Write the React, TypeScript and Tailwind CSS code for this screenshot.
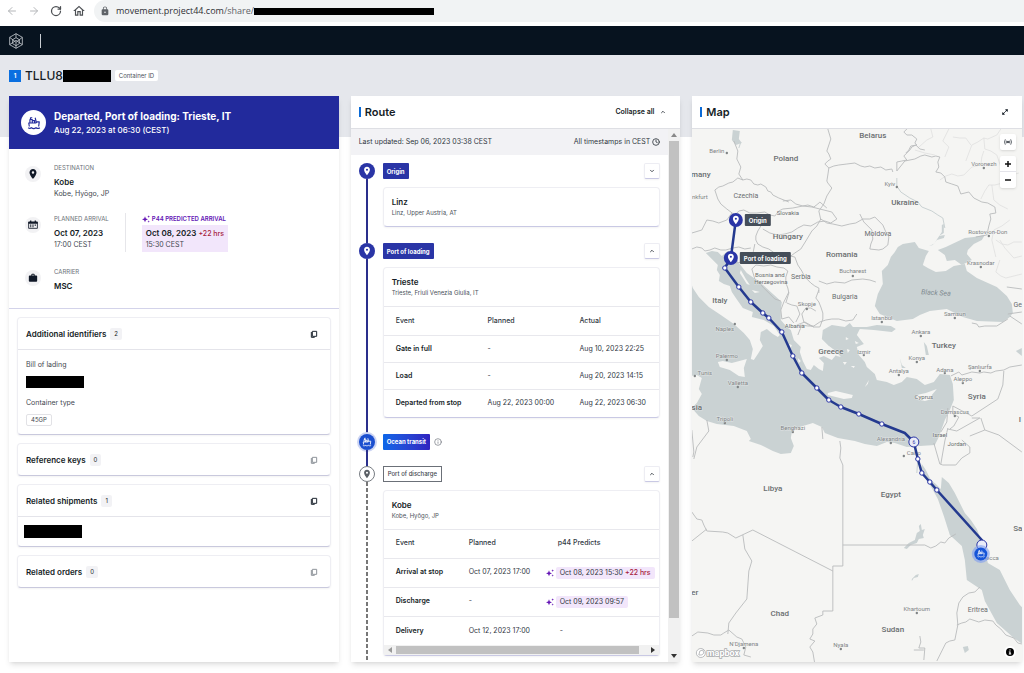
import type { ReactNode } from 'react'
import { ArrowLeft, ArrowRight, ChevronDown, ChevronUp, Clock, Info, Maximize2, RotateCw } from 'lucide-react'
import { MdLock, MdOutlineHome, MdPlace, MdWork } from 'react-icons/md'

const PIN = 'M12 2C8 2 5 5 5 9c0 5.200 7 13 7 13s7-7.800 7-13c0-4-3-7-7-7zm0 9.500a2.500 2.500 0 1 1 0-5 2.500 2.500 0 0 1 0 5z'

function ShipShape() {
    return (
        <g fill="none" stroke="currentColor" strokeWidth="2" strokeLinejoin="round">
            <path d="M5 12V6h4v6M9 12V8h4v4M6 6V3h3M16 11l-2-8" />
            <path d="M4 18l-1-6h12l2-2h4l-1 8" />
            <path d="M2 20c2 1.500 4 1.500 5.500 0 2 1.500 6 1.500 8 0 2 1.500 4.500 1.500 6.500 0" />
        </g>
    )
}

function Ship({ className }: { className: string }) {
    return (
        <svg viewBox="0 0 24 24" className={className}>
            <ShipShape />
        </svg>
    )
}

function Sparkle({ className = 'size-2' }: { className?: string }) {
    return (
        <svg viewBox="0 0 24 24" fill="currentColor" className={`${className} shrink-0 text-[#6415b5]`}>
            <path d="M9 4l2.500 6.500L18 13l-6.500 2.500L9 22l-2.500-6.500L0 13l6.500-2.500z" />
            <path d="M20 1l1 3 3 1-3 1-1 3-1-3-3-1 3-1zM20 16l1 2.500 3 1-3 1-1 2.500-1-2.500-3-1 3-1z" />
        </svg>
    )
}

function Calendar() {
    return (
        <svg viewBox="0 0 24 24" className="size-2.5">
            <path d="M1.500 5h21v15h-21z" fill="none" stroke="currentColor" strokeWidth="2" />
            <path d="M1 4h22v5H1zM5 1h3v4H5zM16 1h3v4h-3zM5 11h3v2.500H5zM10.500 11h3v2.500h-3zM16 11h3v2.500h-3zM5 15h3v2.500H5zM10.500 15h3v2.500h-3z" fill="currentColor" />
        </svg>
    )
}

function Copy() {
    return (
        <svg viewBox="0 0 24 24" fill="none" stroke="currentColor" strokeWidth="3" strokeLinejoin="round" className="size-2">
            <path d="M7 4h13v15H7zM4 6v16h10" />
        </svg>
    )
}

function BrowserBar() {
    return (
        <div className="flex h-[26px] shrink-0 items-start bg-white text-[#5f6368]">
            <div className="flex h-[22px] items-center gap-2.5 pr-2 pl-1.5">
                <button aria-label="Back" className="text-[#b4b6b9]"><ArrowLeft className="size-3" /></button>
                <button aria-label="Forward" className="text-[#b4b6b9]"><ArrowRight className="size-3" /></button>
                <button aria-label="Reload" className="text-[#4c4f53]"><RotateCw className="size-3" strokeWidth={2.5} /></button>
                <button aria-label="Home" className="text-[#4c4f53]"><MdOutlineHome className="size-3.5" /></button>
            </div>
            <div className="flex h-[22px] flex-1 items-center rounded-l-full bg-[#f1f3f4] pl-1.5 font-['Open_Sans',sans-serif] text-[9px]">
                <MdLock className="mr-1.5 size-2.5" />
                <span className="text-[#303134]">movement.project44.com</span>
                <span>/share/</span>
                <span className="h-[7px] w-[180px] bg-black" />
            </div>
        </div>
    )
}

function NavBar() {
    return (
        <nav className="flex h-[29px] shrink-0 items-center gap-4 bg-[#07131f] pl-2 text-[#c9ced3]">
            <svg viewBox="0 0 24 24" fill="none" stroke="currentColor" strokeWidth="1.200" className="size-4">
                <path d="M12 1l9.500 5.500v11L12 23l-9.500-5.500v-11z" />
                <path d="M12 1v6M12 14v9M2.500 6.500L12 14l9.500-7.500M2.500 17.500L12 11l9.500 6.500M7 10v6l5 3 5-3v-6l-5-3z" />
            </svg>
            <span className="h-3.5 w-px bg-[#c9ced3]" />
        </nav>
    )
}

function Detail({ icon, children }: { icon: ReactNode; children: ReactNode }) {
    return (
        <div className="flex gap-[13px]">
            <span className="mt-1 flex size-4 shrink-0 items-center justify-center rounded-full bg-[#f2f2f4] text-[#101827]">{icon}</span>
            {children}
        </div>
    )
}

function Label({ children }: { children: ReactNode }) {
    return <p className="text-[6px] leading-3 text-[#6b7078]">{children}</p>
}

function Group({ title, count, muted, children }: { title: string; count: number; muted?: boolean; children?: ReactNode }) {
    return (
        <section className="rounded-sm border border-[#eeeef3] border-b-[#c9c9dd] shadow-xs">
            <div className="flex h-[31px] items-center px-2">
                <h3 className="text-[8px] font-semibold">{title}</h3>
                <span className="ml-1 rounded-xs bg-[#f2f2f5] px-1 text-[6px] leading-3">{count}</span>
                <button aria-label={`Copy ${title}`} className={`mr-1 ml-auto ${muted ? 'text-[#8f949b]' : 'text-[#1d2630]'}`}><Copy /></button>
            </div>
            {children}
        </section>
    )
}

function Summary() {
    return (
        <section className="overflow-hidden bg-white shadow-md">
            <div className="flex h-[53px] items-center gap-2 bg-[#222a9c] pl-3 text-white">
                <span className="flex size-[25px] items-center justify-center rounded-full bg-white text-[#222a9c]"><Ship className="size-3.5" /></span>
                <div>
                    <h2 className="text-[10px] leading-3.5 font-bold">Departed, Port of loading: Trieste, IT</h2>
                    <p className="text-[8px] leading-3.5 font-medium">Aug 22, 2023 at 06:30 (CEST)</p>
                </div>
            </div>
            <div className="flex h-[160px] flex-col gap-3.5 border-b border-[#d3d3ea] pt-[13px] pl-4">
                <Detail icon={<MdPlace className="size-3" />}>
                    <div>
                        <Label>DESTINATION</Label>
                        <p className="mt-0.5 text-[8px] leading-3 font-semibold">Kobe</p>
                        <p className="text-[7px] leading-[11px] text-[#3f474f]">Kobe, Hyōgo, JP</p>
                    </div>
                </Detail>
                <Detail icon={<Calendar />}>
                    <div className="flex">
                        <div className="border-r border-[#e6e6ea] pr-4">
                            <Label>PLANNED ARRIVAL</Label>
                            <p className="mt-0.5 text-[8px] leading-3 font-semibold">Oct 07, 2023</p>
                            <p className="text-[7px] leading-[11px] text-[#3f474f]">17:00 CEST</p>
                        </div>
                        <div className="ml-4">
                            <p className="flex items-center gap-0.5 text-[6px] leading-3 font-semibold text-[#6415b5]"><Sparkle /> P44 PREDICTED ARRIVAL</p>
                            <div className="bg-[#f2e6fb] px-1 py-0.5">
                                <p className="text-[8px] leading-3 font-semibold">Oct 08, 2023 <span className="text-[7px] font-medium text-[#a61b3c]">+22 hrs</span></p>
                                <p className="text-[7px] leading-2.5 text-[#3f474f]">15:30 CEST</p>
                            </div>
                        </div>
                    </div>
                </Detail>
                <Detail icon={<MdWork className="size-2.5" />}>
                    <div>
                        <Label>CARRIER</Label>
                        <p className="mt-0.5 text-[8px] leading-3 font-semibold">MSC</p>
                    </div>
                </Detail>
            </div>
            <div className="flex flex-col gap-2 p-2">
                <Group title="Additional identifiers" count={2}>
                    <div className="border-t border-[#e4e4ea] px-2 pt-2 pb-2 text-[7px] text-[#3f474f]">
                        <p className="leading-3.5">Bill of lading</p>
                        <div className="mt-1 h-3 w-[58px] bg-black" />
                        <p className="mt-2 leading-3.5">Container type</p>
                        <span className="mt-1 inline-block rounded-xs border border-[#e2e2e6] px-1 text-[6px] leading-2.5">45GP</span>
                    </div>
                </Group>
                <Group title="Reference keys" count={0} muted />
                <Group title="Related shipments" count={1}>
                    <div className="border-t border-[#e4e4ea] px-1.5 pt-2 pb-2">
                        <div className="h-[13px] w-[58px] bg-black" />
                    </div>
                </Group>
                <Group title="Related orders" count={0} muted />
            </div>
        </section>
    )
}

function PanelHeader({ title, children }: { title: string; children: ReactNode }) {
    return (
        <div className="flex h-[33px] shrink-0 items-center border-b border-[#dedfe4] pr-3.5 pl-2">
            <span className="mr-1 h-2.5 w-0.5 bg-[#0a6ad6]" />
            <h2 className="mr-auto text-[11px] font-semibold">{title}</h2>
            {children}
        </div>
    )
}

function PinMarker({ pending }: { pending?: boolean }) {
    return (
        <span className={`flex size-4 items-center justify-center rounded-full ${pending ? 'border border-[#777c82] bg-white text-[#5b6066]' : 'bg-[#2a35a6] text-white'}`}>
            <MdPlace className="size-2.5" />
        </span>
    )
}

function Stop({ marker, badge, line, action, children }: { marker: ReactNode; badge: ReactNode; line: string; action?: 'open' | 'closed'; children?: ReactNode }) {
    return (
        <li className="flex gap-2">
            <div className="flex w-4 shrink-0 flex-col items-center">
                {marker}
                <span className={`flex-1 ${line}`} />
            </div>
            <div className="min-w-0 flex-1 pb-4">
                <div className="flex h-4 items-center">
                    {badge}
                    {action && (
                        <button aria-label="Toggle stop" className="ml-auto flex size-4 items-center justify-center rounded-xs border border-[#ededf3] border-b-[#c9c9e4] shadow-xs">
                            {action === 'open' ? <ChevronUp className="size-1.5" strokeWidth={3} /> : <ChevronDown className="size-1.5" strokeWidth={3} />}
                        </button>
                    )}
                </div>
                {children}
            </div>
        </li>
    )
}

function StopCard({ city, place, children }: { city: string; place: string; children?: ReactNode }) {
    return (
        <div className="mt-2 rounded-sm border border-[#eeeef3] border-b-[#c9c9e4] shadow-xs">
            <div className="h-[38px] px-2 pt-2">
                <h3 className="text-[8px] leading-3 font-semibold">{city}</h3>
                <p className="text-[6px] leading-2.5 text-[#4b525a]">{place}</p>
            </div>
            {children}
        </div>
    )
}

const solid = 'w-0.5 bg-[#2a2f8c]'
const badge = 'flex h-4 items-center rounded-[1px] px-1 text-[6px] font-bold text-white'
const loadingRows = [
    ['Gate in full', '-', 'Aug 10, 2023 22:25'],
    ['Load', '-', 'Aug 20, 2023 14:15'],
    ['Departed from stop', 'Aug 22, 2023 00:00', 'Aug 22, 2023 06:30'],
]
const dischargeRows = [
    { event: 'Arrival at stop', planned: 'Oct 07, 2023 17:00', predicted: 'Oct 08, 2023 15:30', late: '+22 hrs' },
    { event: 'Discharge', planned: '-', predicted: 'Oct 09, 2023 09:57', late: '' },
    { event: 'Delivery', planned: 'Oct 12, 2023 17:00', predicted: '', late: '' },
]

function Route() {
    return (
        <section className="flex min-h-0 flex-col bg-white shadow-md">
            <PanelHeader title="Route">
                <button className="flex items-center gap-1.5 text-[7px] font-semibold">Collapse all <ChevronUp className="size-1.5" strokeWidth={3} /></button>
            </PanelHeader>
            <div className="flex min-h-0 flex-1">
                <div className="min-w-0 flex-1 overflow-hidden">
                    <div className="flex h-[26px] items-center justify-between bg-[#f2f2f5] px-2 text-[7px] text-[#30373f]">
                        <span>Last updated: Sep 06, 2023 03:38 CEST</span>
                        <span className="flex items-center gap-0.5">All timestamps in CEST <Clock className="size-2" strokeWidth={2.5} /></span>
                    </div>
                    <ul className="pt-2 pr-2 pl-2">
                        <Stop marker={<PinMarker />} badge={<span className={`${badge} bg-[#2a35a6]`}>Origin</span>} line={solid} action="closed">
                            <StopCard city="Linz" place="Linz, Upper Austria, AT" />
                        </Stop>
                        <Stop marker={<PinMarker />} badge={<span className={`${badge} bg-[#2a35a6]`}>Port of loading</span>} line={solid} action="open">
                            <StopCard city="Trieste" place="Trieste, Friuli Venezia Giulia, IT">
                                <table className="w-full table-fixed text-left text-[7px] text-[#30373f]">
                                    <thead>
                                        <tr className="h-[29px] border-t border-[#e8e8ed]">
                                            <th className="pl-3 font-medium">Event</th>
                                            <th className="pl-3 font-medium">Planned</th>
                                            <th className="pl-3 font-medium">Actual</th>
                                        </tr>
                                    </thead>
                                    <tbody>
                                        {loadingRows.map(([event, planned, actual]) => (
                                            <tr key={event} className="h-[27px] border-t border-[#e8e8ed] whitespace-nowrap">
                                                <td className="pl-3 font-semibold text-[#151d26]">{event}</td>
                                                <td className="pl-3">{planned}</td>
                                                <td className="pl-3">{actual}</td>
                                            </tr>
                                        ))}
                                    </tbody>
                                </table>
                            </StopCard>
                        </Stop>
                        <Stop
                            marker={<span className="flex size-4 items-center justify-center rounded-full bg-[#1b4fcf] text-white ring-2 ring-[#cdd5f3]"><Ship className="size-2.5" /></span>}
                            badge={<><span className={`${badge} bg-linear-to-r from-[#0a66e8] to-[#2f22c0]`}>Ocean transit</span><Info className="ml-1 size-2 text-[#6b7078]" /></>}
                            line={solid}
                        />
                        <Stop
                            marker={<PinMarker pending />}
                            badge={<span className="flex h-4 items-center border border-[#6b7078] px-1 text-[6px] font-medium text-[#3f474f]">Port of discharge</span>}
                            line="w-0.5 bg-[repeating-linear-gradient(to_bottom,#777_0_4px,#fff_4px_6px)]"
                            action="open"
                        >
                            <StopCard city="Kobe" place="Kobe, Hyōgo, JP">
                                <table className="w-full table-fixed text-left text-[7px] text-[#30373f]">
                                    <thead>
                                        <tr className="h-[29px] border-t border-[#e8e8ed]">
                                            <th className="w-[73px] pl-3 font-medium">Event</th>
                                            <th className="w-[77px] pl-3 font-medium">Planned</th>
                                            <th className="pl-6 font-medium">p44 Predicts</th>
                                        </tr>
                                    </thead>
                                    <tbody>
                                        {dischargeRows.map((row) => (
                                            <tr key={row.event} className="h-[29px] border-t border-[#e8e8ed] whitespace-nowrap">
                                                <td className="pl-3 font-semibold text-[#151d26]">{row.event}</td>
                                                <td className="pl-3">{row.planned}</td>
                                                <td className={row.predicted ? 'pl-3' : 'pl-[26px]'}>
                                                    {row.predicted ? (
                                                        <span className="flex items-center gap-0.5">
                                                            <Sparkle />
                                                            <span className="rounded-xs bg-[#f2e6fb] px-1 leading-3">
                                                                {row.predicted} {row.late && <span className="font-medium text-[#a61b3c]">{row.late}</span>}
                                                            </span>
                                                        </span>
                                                    ) : '-'}
                                                </td>
                                            </tr>
                                        ))}
                                    </tbody>
                                </table>
                                <div className="flex h-2.5 items-center bg-[#f1f1f1] px-1 text-[#333]">
                                    <svg viewBox="0 0 4 6" className="h-1.5 w-1 text-[#999]"><path d="M4 0v6L0 3z" fill="currentColor" /></svg>
                                    <span className="mr-3 ml-1 h-2 flex-1 bg-[#c1c1c1]" />
                                    <svg viewBox="0 0 4 6" className="h-1.5 w-1"><path d="M0 0v6l4-3z" fill="currentColor" /></svg>
                                </div>
                            </StopCard>
                        </Stop>
                    </ul>
                </div>
                <div className="flex w-3 shrink-0 flex-col items-center bg-[#f1f1f1] py-1">
                    <svg viewBox="0 0 6 4" className="h-1 w-1.5 shrink-0"><path d="M0 4h6L3 0z" fill="#888" /></svg>
                    <span className="my-1 w-2.5 flex-9 bg-[#c1c1c1]" />
                    <span className="flex-[0.6]" />
                    <svg viewBox="0 0 6 4" className="h-1 w-1.5 shrink-0"><path d="M0 0h6L3 4z" fill="#333" /></svg>
                </div>
            </div>
        </section>
    )
}

const water = [
    'M715 262l3 3-1 5 3 5-1 6 5 3 6 2 2 6 4 6 7 10 10 4-1 5 12 3 10 6 6 9-2 2-5-3-6-5-6 3-1 8 3 6-5 8-4 6-3-1 2-10-3-9-6-7-10-9-13-9-12-8-10-10-6-9-2-6v94l6-1 5 3-3 11 3 5-5 9-5 5 7 8 8 5 10 3 17 2 13 5 4 8-2 2 12 4 12 6 8 3 10-1 3-7-3-8 1-6 8-5 13-4 9 4 3 6 13 5 17 3 10 3 12 2 10-4 8 1 12 4 13-1 15-1 4-8 6-17 5-10 4-10-1-16-3-9-10-1-6 8-9 3-8-6-10-2-5 5-8 3-7-3-10-2-2-6-8-7-2-5-6-7-2-8 7-3-7-9 3-6 14 1 18 2 4-3-5-3-14-1-10 2-14 0-3-4-5 4-13-2-9 5-1 9 6 6 9 9-5 6-8-4-5 2 5 5-1 8-4-2-5-4-3 5-4-1-4-8-3-9 1-5-7-7-3-10-4-3-6-7 0-10 1-8-10-9-11-10-14-10-8-10-5-9-6-3-6 5-4-4-6-1-6 2z',
    'M888 265l3-8 4-5 3-5 5-3 12-2 4 6 10 3-3 5-3 9 5 3 8 4 10-1 8-5 11-2 2 7 10 7 20 9 10 9 5 8 1 9-3 4-7 5-26-1-14-4-16-8-17 2-10 4-7 4-16 2-17-7-5-8 3-12 5-10-1-13z',
    'M938 250l8-3 19-9 9-1 11-2-3 5-8 4-6 6-1 4 5 6-10 5-7-5-8 1-2-6z',
    'M942 477l7 6 6 10 10 20 6 7 6 9 8 20 3 14 12 7 10 20 10 15 4 4v36l-10-7-17-15-12-22-3-11-15-10-2-20-3-14-12-11-6-19-6-17-6-11-6-9-5-10 1-5 4 6 5 10 5 4 5 5z',
    'M733 130l7 1-1 8 3 4-6 2-4-5z',
    'M904 548l5-5 6-3 2-7 3-2-1-5 2-2 1 6 3-1-2 6 1 3-5 1-2 4-6 2-4 4z',
    'M912 579l4-4 3-1-1 3-4 1-2 3z',
    'M963 647l5-1 1 4-4 3z',
    'M1016 351l6-3v8z',
    'M929 246l5-2 8-12 0-7 2-1 0 9-5 3 6-1-1 3-7 2-4 5z',
    'M924 342l3 4 2 9-3 0z',
    'M900 358l2 7 4 3-4 0z',
]

const rivers = [
    'M897 178l0 8 4 6 9 6 8 4 4 5 10 4 6 4 5 3 2 10M741 142l-2 6',
    'M918 459l-1 14M914 445l2 8',
]

const islands = [
    'M718 362l5-1 9 2 15-4-3 9 1 9-6-1-9-6-10-3z',
    'M828 393l8-2 17 4-1 3-8 1-16-4z',
    'M917 395l9-2 11-4-5 6 0 4-7 2-8-2z',
    'M829 346l7 5 5 6-4-1-8-7z',
    'M855 341l4 2-3 1zM847 349l3 1-2 3zM843 362l4 0-2 3zM851 366l4 0-1 2zM869 380l-4 7 3-3zM846 337l3 2-3 1zM789 344l2 4 1-3zM798 358l3 3-2 2z',
    'M741 270l5 9 4 6-3-1-7-11zM752 290l8 2-5 1z',
]

const borders = [
    'M734 141l4 10-1 8 4 8-2 7 4 6',
    'M743 180l-5-2-5 4-4 1-6 3-4 1-4 3 3 9 3 5 6 5 8 6 4-4 5-1 6 3 7 0 8-1 5 3 5 1 4-5 4-2 10-1 10-2 9 1 8 2 12 3 5 7-6 4-6-2-7 1-7 4-7-1-6 3-6 4-7 2-7 1-8-2-7-4',
    'M743 180l4-1 4 1 3 4 4 1 3-1 5 3 2 4 3 1 2 3 6 3 10 4M783 201l8-1 5 4 7 2 5-1 6 2 4-3 2-2 7 6',
    'M828 129l3 10-4 12 2 3 2 5-3 2-3 3 4 4-1 7-1 6 1 2 4 5-5 8-3 8-5 7 2 9',
    'M829 168l5-2 5-1 8-1 8-1 6 3 4 1 5-1 5 2 6-1 5 3 6-1 1 3M897 171l0-9 5-1 5-1-3-4 3-3 3-3 2-3 4-2 4 4 5 1M907 129l-3 3 3 3 5 0 5 4-2 4 2 2-6 1-2 4-3 3',
    'M897 171l4-5 4-5 10-2 6-3 4-1 7 2 4-1 4 1-2 5 1 5-3 5 5 1 4 4 1 5 6 2 6 2 3 8 8-2 5 6 8 4 6 1 7 4 1 6-6 1 1 5-2 7-2 9-11 2',
    'M821 219l6 4 6 1 9 2 8-2 6-1 7-4 7 0 5-2 8 8 3 7 3 5-1 8-5 4-4 1-9-1 1-5 2-5-1-9-4-4-4-4-2-4-2-4',
    'M821 219l-4 7-5 5-6 10-5 8-6 4-4 3-9 0-6-2-7-5-6-2-5-3-2-4 0-4 2-5 3-5',
    'M692 233l10-3 5-10 6 1 6 2 8-3 5-7M692 249l5-2 5 1 3 3 5-1 5-2 6 2 5 0 7-2 6-1 6 2 6-1',
    'M755 244l-1 5-1 5-6 8-5 0-6 1M755 254l6 2 5 3 8-2 8 0 8-1 5 1 3 8 4 6 3 6 6 6 4 3 4 2 0 5M752 269l4-4 8 1 7-1 6 2 7 1 4 3-2 6 0 6 2 5 1 5-3 10M752 269l3 10 4 3 4 5 7 7 5 5 6 2',
    'M789 292l-5 10-3 8 1 9 7-2 5 6M819 290l-3 8 3 4 2 5 2 6 0 6-3 8-6 0-5-2-5-3-2-8 4-6 5 0 5 3M798 335l4-10 6 1 6 0 6-4 6-2 6-1 7 0 7 2 7-1 4-6M814 327l-9-5-8 3M819 281l8 3 8-2 10 1 7-3 11-1 7 1 6 2M787 303l5 2 5 1 3 8-4 8',
    'M951 376l8-4 3 3 10-3 8 1 4-1 7 1 5-2 8-1 6-3 12-2M1004 371l-1 14-5 14-26 17-19-10M953 406l0 8 6 3-5 9-4 3M948 408l-1 14-6 10M948 429l9 2 23-13-8 0M981 418l4 12-15 6M985 430l14 5 23 17M934 443l6 21 3 1 13 0 6-7 8-5 0-6-8-7M941 464l4-23 3-13',
    'M840 441l1 7-1 10 3 7v101h-10v5l-80-41-17 8-8-5-5-1-16-1-3-6-2-5-5-1-5-7M707 529l-15 12M843 545h82l6 3 5-2 5-4 4 1 4-5 7-4M833 571v40h-10v4l-8 3 2 6-4 5 0 5-3 5 5 2-5 6 3 5 2 12M743 535l2 14 7 12-3 10-2 28-11 14-7 10-1 11M692 636l6-4 10 1 6 2 7 0 3-2 5-3 8 7 5 2 4 8-2 8 7 2',
    'M980 587l-5 5-6 1-6 4-4 6-2 10 1 12-3 15-5 1-4 2-4 8-5 10M957 625l5-2 4-1 4-3 9 3 6-2 8 1 3 4 5 4 5 6 8 3 4 5 4 1M920 636l1 6-2 6 6 0-1 12M914 650l10 0M1007 287l15 2M1008 314l14-2M1010 316l12 8M707 420l2 11-6 8-6 8-3 12M822 427l1 12M692 430l2 22-1 5',
    'M972 323l5 1 2 3 6-1 12 0 11-7',
]

const faint = [
    'M918 148l9-8 6-3-2-8M945 157l2-5 2-5-6-6 6-12M966 161l3-8 3-8 6-3 6-4 4 1 9-4 4-6M971 145l-5-7-6 0-7-1M984 138l1 11 6 2 6 4 4 12 8-2 7-1M940 180l6-4 6-2 6 2 6-1 8-8 9-2 1-8 2-6M981 199l4-8 4-6 6 0 8-2 4-9 5 1 7-2M1008 209l-8-4-6-5-2-15M1010 220l-8 6-8 4-2 10 4 17M996 240l6 4 6 1 6-3 8 0M1000 260l-4 12 5 4 5 2 16-4M1000 240l5 8 9 10 8-2M915 150l10 3 10 2',
]

const countries: [string, number, number, number][] = [
    ['Belarus', 873, 135, 8], ['Poland', 786, 158, 8], ['many', 701, 174, 8], ['Czechia', 746, 196, 7], ['Slovakia', 788, 212, 6],
    ['Ukraine', 905, 202, 8], ['Moldova', 878, 234, 7], ['Hungary', 788, 236, 8], ['Romania', 842, 254, 8], ['Bosnia and', 770, 274, 6],
    ['Herzegovina', 771, 281, 6], ['Serbia', 801, 277, 7], ['Bulgaria', 845, 297, 7], ['Italy', 720, 300, 8], ['Albania', 795, 325, 6],
    ['Greece', 831, 351, 8], ['Turkey', 944, 345, 8], ['Syria', 977, 396, 8], ['Cyprus', 924, 396, 6], ['Israel', 940, 434, 6],
    ['Jordan', 957, 443, 6], ['Libya', 773, 488, 8], ['Egypt', 891, 494, 8], ['Chad', 780, 613, 8], ['Sudan', 893, 629, 8],
    ['Eritrea', 978, 610, 7], ['sia', 697, 407, 8], ['er', 695, 592, 8], ['Sa', 1018, 528, 8], ['Ge', 1018, 305, 7], ['I', 1020, 419, 8],
]

// name, label x/y, dot x/y
const cities: [string, number, number, number, number][] = [
    ['Berlin', 717, 150, 727, 153], ['nkfurt', 700, 196, 0, 0], ['Kyiv', 890, 183, 897, 187], ['Voronezh', 984, 163, 984, 168],
    ['Rostov-on-Don', 988, 231, 989, 236], ['Krasnodar', 981, 262, 981, 267], ['Bucharest', 853, 270, 853, 276], ['Skopje', 807, 303, 807, 309],
    ['Naples', 725, 328, 735, 324], ['Palermo', 727, 355, 727, 360], ['Tunis', 705, 372, 695, 376], ['Valletta', 738, 382, 738, 387],
    ['Tripoli', 725, 418, 725, 423], ['Benghazi', 793, 427, 793, 432], ['Istanbul', 882, 317, 882, 322], ['Samsun', 955, 313, 955, 318],
    ['Ankara', 921, 331, 921, 336], ['Izmir', 864, 351, 864, 355], ['Konya', 917, 357, 917, 362], ['Antalya', 899, 370, 899, 375],
    ['Adana', 945, 369, 945, 373], ['Şanlıurfa', 980, 366, 980, 371], ['Aleppo', 963, 378, 963, 383], ['Damascus', 955, 411, 955, 416],
    ['Alexandria', 891, 438, 891, 443], ['Cairo', 914, 452, 904, 456], ['Mecca', 990, 557, 0, 0], ['Khartoum', 917, 608, 917, 613],
    ['Nyala', 841, 644, 841, 649], ["N'Djamena", 744, 643, 744, 648],
]

const track = [
    [725, 268], [739, 287], [751, 302], [763, 313], [769, 318], [782, 332], [793, 356], [802, 373], [817, 388],
    [829, 400], [841, 407], [859, 414], [882, 424], [914, 442], [918, 459], [922, 473], [930, 482], [937, 490],
]

function MapPin({ x, y, label, width }: { x: number; y: number; label: string; width: number }) {
    return (
        <g transform={`translate(${x} ${y})`}>
            <circle r="7" fill="#2a35a6" />
            <path d={PIN} fill="#fff" fillRule="evenodd" transform="translate(-5 -5) scale(.42)" />
            <rect x="9" y="-6" width={width} height="12" rx="1" fill="#454e59" />
            <text x="13" y="0" dominantBaseline="central" fontSize="6" fontWeight="700" fill="#fff" className="font-['Inter',sans-serif]">{label}</text>
        </g>
    )
}

function MapView() {
    return (
        <svg viewBox="692 129 330 533" preserveAspectRatio="xMidYMid slice" className="size-full bg-[#f5f5f3] font-[Roboto,sans-serif]">
            <g fill="#cad2d3">{water.map((d) => <path key={d} d={d} />)}</g>
            <g fill="none" stroke="#cad2d3" strokeWidth="1">{rivers.map((d) => <path key={d} d={d} />)}</g>
            <g fill="#f5f5f3">{islands.map((d) => <path key={d} d={d} />)}</g>
            <g fill="none" stroke="#dcdcdc" strokeWidth=".7">{faint.map((d) => <path key={d} d={d} />)}</g>
            <g fill="none" stroke="#b9bbbc" strokeWidth=".9" strokeLinejoin="round">{borders.map((d) => <path key={d} d={d} />)}</g>
            <g textAnchor="middle" stroke="#f5f5f3" strokeWidth="1" strokeOpacity=".5" paintOrder="stroke" dominantBaseline="central">
                {cities.map(([name, x, y, dx, dy]) => (
                    <g key={name} fill="#808486" fontSize="6">
                        {dx > 0 && <circle cx={dx} cy={dy} r="1.200" stroke="none" />}
                        <text x={x} y={y}>{name}</text>
                    </g>
                ))}
                {countries.map(([name, x, y, size]) => (
                    <text key={name} x={x} y={y} fontSize={size} fontWeight={size > 7 ? 500 : 400} fill="#6a6e70">{name}</text>
                ))}
            </g>
            <text x="936" y="295" textAnchor="middle" fontSize="7" fontStyle="italic" fill="#7d898f" transform="rotate(3 936 295)">Black Sea</text>
            <path d="M736 220L731 258L725 268L739 287L751 302L763 313L769 318L782 332L793 356L802 373L817 388L829 400L841 407L859 414L882 424L905 433L914 442L918 459L922 473L930 482L937 490L982 540V546" fill="none" stroke="#243a8f" strokeWidth="2.500" strokeLinejoin="round" />
            {track.map(([x, y]) => (
                <circle key={y} cx={x} cy={y} r="2.200" fill="#fff" stroke="#2a35a6" strokeWidth="1" />
            ))}
            <circle cx="914" cy="442" r="5" fill="#e9ebf8" stroke="#2a35a6" />
            <text x="914" y="442" textAnchor="middle" dominantBaseline="central" fontSize="5" fill="#2a35a6">6</text>
            <circle cx="982" cy="545" r="5" fill="#e9ebf8" stroke="#2a35a6" />
            <circle cx="981" cy="554" r="9" fill="#7f9df0" opacity=".6" />
            <circle cx="981" cy="554" r="6.500" fill="#1554d8" />
            <g color="#fff" transform="translate(977 549.500) scale(.35)"><ShipShape /></g>
            <MapPin x={736} y={220} label="Origin" width={26} />
            <MapPin x={731} y={258} label="Port of loading" width={51} />
            <g fill="#fff" stroke="#a9acae" strokeWidth=".8">
                <circle cx="701" cy="653" r="4.500" />
                <path d="M699 655l1-4 3-1 1 3-2 2z" />
                <text x="707" y="656" fontSize="9" fontWeight="700" strokeWidth="1.600" paintOrder="stroke">mapbox</text>
            </g>
        </svg>
    )
}

function MapPanel() {
    return (
        <section className="flex min-h-0 flex-col bg-white shadow-md">
            <PanelHeader title="Map">
                <button aria-label="Expand map"><Maximize2 className="size-1.5" strokeWidth={4} /></button>
            </PanelHeader>
            <div className="relative min-h-0 flex-1">
                <div className="absolute inset-0"><MapView /></div>
                <div className="absolute top-[5px] right-1.5 flex flex-col gap-1.5">
                    <button aria-label="Live position" className="flex size-4 items-center justify-center rounded-xs bg-white shadow-sm">
                        <svg viewBox="0 0 24 24" fill="none" stroke="currentColor" strokeWidth="2" className="size-2">
                            <circle cx="12" cy="12" r="2" fill="currentColor" />
                            <path d="M8 8q-3 4 0 8M16 8q3 4 0 8M4 4q-5 8 0 16M20 4q5 8 0 16" />
                        </svg>
                    </button>
                    <div className="flex flex-col rounded-xs bg-white shadow-sm">
                        <button aria-label="Zoom in" className="flex size-4 items-center justify-center border-b border-[#e4e4ea]">
                            <svg viewBox="0 0 6 6" className="size-1.5"><path d="M0 3h6M3 0v6" stroke="#111" strokeWidth="1.500" /></svg>
                        </button>
                        <button aria-label="Zoom out" className="flex size-4 items-center justify-center">
                            <svg viewBox="0 0 6 6" className="size-1.5"><path d="M0 3h6" stroke="#111" strokeWidth="1.500" /></svg>
                        </button>
                    </div>
                </div>
                <button aria-label="Attribution" className="absolute right-1.5 bottom-1 flex size-3 items-center justify-center rounded-full bg-white">
                    <svg viewBox="0 0 20 20" className="size-2"><path fillRule="evenodd" d="M10 0a10 10 0 1 0 0 20 10 10 0 0 0 0-20zM8.500 3.500h3v3h-3zM7 8.500h4.500V14H13v2H7v-2h1.500v-3.500H7z" /></svg>
                </button>
            </div>
        </section>
    )
}

export default function App() {
    return (
        <div className="flex h-screen flex-col bg-white font-['Inter',sans-serif] text-[#151d26]">
            <BrowserBar />
            <NavBar />
            <main className="flex min-h-0 flex-1 flex-col bg-[linear-gradient(to_bottom,#e5e7ec_82px,#fff_82px)] pr-0.5 pb-[11px] pl-[9px]">
                <div className="flex h-[41px] shrink-0 items-center">
                    <span className="flex size-3 items-center justify-center bg-[#0a6fe0] text-[6px] font-bold text-white">1</span>
                    <h1 className="ml-1 text-[12px] font-medium">TLLU8</h1>
                    <span className="h-3 w-12 bg-black" />
                    <span className="ml-1 rounded-xs bg-white px-1 text-[6px] leading-[11px] text-[#4b525a]">Container ID</span>
                </div>
                <div className="grid min-h-0 flex-1 grid-cols-3 grid-rows-1 gap-3">
                    <Summary />
                    <Route />
                    <MapPanel />
                </div>
            </main>
        </div>
    )
}
